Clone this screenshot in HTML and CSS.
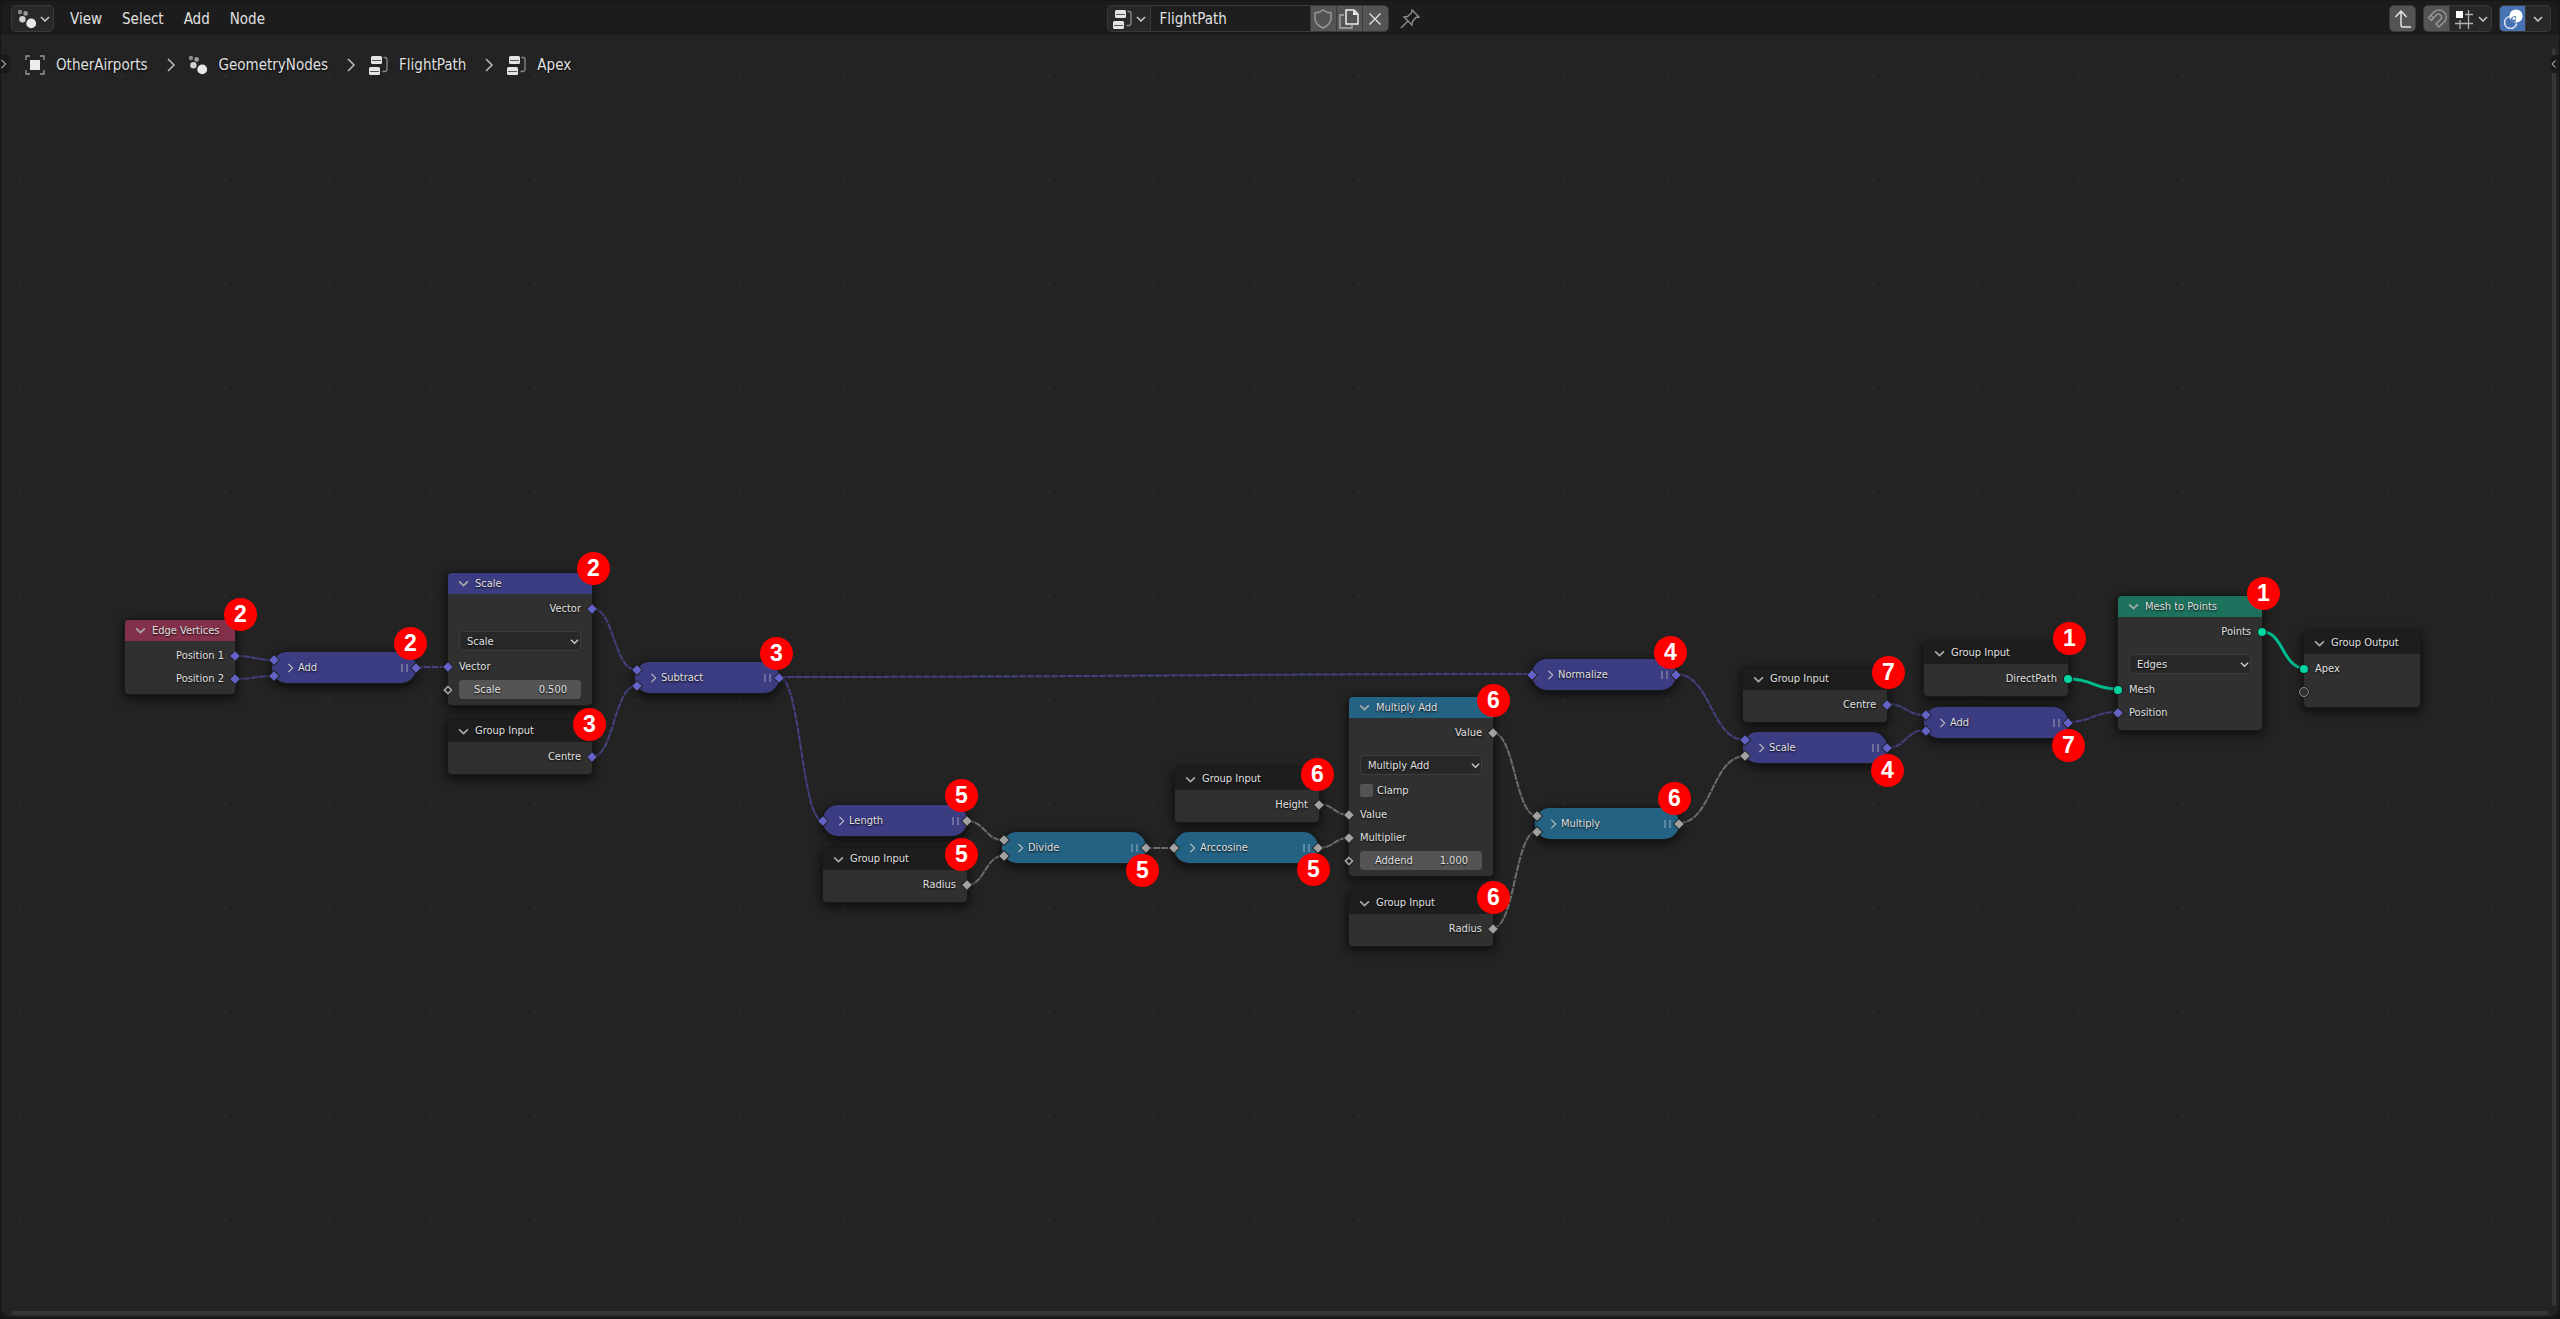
FILE: index.html
```html
<!DOCTYPE html>
<html lang="en">
<head>
<meta charset="utf-8">
<title>Geometry Nodes - Apex</title>
<link rel="stylesheet" href="styles.css">
</head>
<body>
<svg class="defs" width="0" height="0" aria-hidden="true">
  <symbol id="i-geo" viewBox="0 0 20 20"><circle cx="3" cy="3" r="2.2" fill="#8a8a8a"/><circle cx="8.6" cy="4.4" r="2.3" fill="#9c9c9c"/><circle cx="5.4" cy="10.2" r="3.2" fill="#cfcfcf"/><circle cx="14.2" cy="14.4" r="4.9" fill="#e8e8e8"/></symbol>
  <symbol id="i-tree" viewBox="0 0 20 20"><rect x="3" y="1" width="11" height="8" rx="1.5" fill="#e4e4e4"/><path d="M4 5.5h9" stroke="#555" stroke-width="1"/><rect x="1" y="12" width="11" height="8" rx="1.5" fill="#e4e4e4"/><path d="M2 16.5h9" stroke="#555" stroke-width="1"/><path d="M15.500 2.500h1.500q2 0 2 2v9.500q0 2.500-2.500 2.500h-2" fill="none" stroke="#8a8a8a" stroke-width="1.300"/></symbol>
  <symbol id="i-object" viewBox="0 0 20 20"><rect x="5" y="5" width="10" height="10" fill="#ececec"/><path d="M1 5V1h4M15 1h4v4M19 15v4h-4M5 19H1v-4" fill="none" stroke="#999" stroke-width="1.300"/></symbol>
  <symbol id="i-down" viewBox="0 0 10 10"><path d="M1 3l4 4 4-4" fill="none" stroke="currentColor" stroke-width="1.500"/></symbol>
  <symbol id="i-right" viewBox="0 0 10 14"><path d="M2 1l6 6-6 6" fill="none" stroke="currentColor" stroke-width="1.500"/></symbol>
  <symbol id="i-left" viewBox="0 0 10 14"><path d="M8 2L3 7l5 5" fill="none" stroke="currentColor" stroke-width="1.500"/></symbol>
  <symbol id="i-shield" viewBox="0 0 20 20"><path d="M10 1c2.500 2 5 2.800 8 3v5c0 5-3.500 8-8 10-4.500-2-8-5-8-10V4c3-.2 5.500-1 8-3z" fill="none" stroke="#999" stroke-width="1.500"/></symbol>
  <symbol id="i-copy" viewBox="0 0 20 20"><path d="M5 6H1v13h12v-3" fill="none" stroke="#aaa" stroke-width="1.400"/><path d="M7 1h8l4 4v10H7z" fill="none" stroke="#eee" stroke-width="1.500"/><path d="M14 1l5 5h-5z" fill="#eee"/></symbol>
  <symbol id="i-close" viewBox="0 0 20 20"><path d="M4.500 4.500l11 11M15.500 4.500l-11 11" fill="none" stroke="#e0e0e0" stroke-width="1.400"/></symbol>
  <symbol id="i-pin" viewBox="0 0 20 20"><path d="M12 1l7 7-3 .5-3.500 4L12 16 4 8l3.500-.5 4-3.500zM7.500 12.500L1 19" fill="none" stroke="#8f8f8f" stroke-width="1.400"/></symbol>
  <symbol id="i-parent" viewBox="0 0 20 20"><path d="M2.500 8L8 2l5.500 6M8 2v14q0 2 2 2h8" fill="none" stroke="#e4e4e4" stroke-width="1.500"/></symbol>
  <symbol id="i-magnet" viewBox="0 0 20 20"><path d="M1.500 8.500L7 3c7-6 16 3 10.500 9.500L12 18l-3-3 5-5c2-3-2-6-4.500-4.500l-5 6zM4 6.500l3 3" fill="none" stroke="#9a9a9a" stroke-width="1.400"/></symbol>
  <symbol id="i-grid" viewBox="0 0 20 20"><path d="M6 11v9M14.500 1v19M11 5.500h8M1 14.500h18" fill="none" stroke="#b0b0b0" stroke-width="1.300"/><rect x="2" y="2" width="7" height="7" fill="#fff"/></symbol>
  <symbol id="i-overlay" viewBox="0 0 20 20"><circle cx="13" cy="7" r="6.600" fill="#fff"/><path d="M7 7.500a6 6 0 1 0 6.500 7" fill="none" stroke="#dfe8f6" stroke-width="1.600"/><path d="M7.500 10.500q1-3.500 5-3.500 1.500 3.500-.5 6-3.500.5-4.500-2.500z" fill="#4772b3"/><circle cx="11" cy="9.500" r="1.600" fill="#fff"/></symbol>
</svg>

<main class="editor">
  <header class="bar">
    <div class="bar-left">
      <button class="box editor-type" aria-label="Editor type"><svg class="ico"><use href="#i-geo"/></svg><svg class="caret"><use href="#i-down"/></svg></button>
      <nav class="menus"><button>View</button><button>Select</button><button>Add</button><button>Node</button></nav>
    </div>
    <div class="bar-mid">
      <div class="box group">
        <button class="pick" aria-label="Browse node tree"><svg class="ico"><use href="#i-tree"/></svg><svg class="caret"><use href="#i-down"/></svg></button>
        <input class="tree-name" type="text" value="FlightPath" aria-label="Node tree name">
        <button class="sq lit" aria-label="Fake user"><svg class="ico"><use href="#i-shield"/></svg></button>
        <button class="sq lit" aria-label="New node tree"><svg class="ico"><use href="#i-copy"/></svg></button>
        <button class="sq lit" aria-label="Unlink"><svg class="ico"><use href="#i-close"/></svg></button>
      </div>
      <button class="pin" aria-label="Pin"><svg class="ico"><use href="#i-pin"/></svg></button>
    </div>
    <div class="bar-right">
      <div class="box group"><button class="sq lit" aria-label="Parent node tree"><svg class="ico"><use href="#i-parent"/></svg></button></div>
      <div class="box group"><button class="sq lit" aria-label="Snap"><svg class="ico"><use href="#i-magnet"/></svg></button><button class="pick" aria-label="Snap element"><svg class="ico"><use href="#i-grid"/></svg><svg class="caret"><use href="#i-down"/></svg></button></div>
      <div class="box group"><button class="sq on" aria-label="Overlays"><svg class="ico"><use href="#i-overlay"/></svg></button><button class="sq" aria-label="Overlay options"><svg class="caret"><use href="#i-down"/></svg></button></div>
    </div>
  </header>

  <nav class="crumbs" aria-label="Path">
    <a href="#object"><svg class="ico"><use href="#i-object"/></svg>OtherAirports</a><svg class="sep"><use href="#i-right"/></svg>
    <a href="#modifier"><svg class="ico"><use href="#i-geo"/></svg>GeometryNodes</a><svg class="sep"><use href="#i-right"/></svg>
    <a href="#flightpath"><svg class="ico"><use href="#i-tree"/></svg>FlightPath</a><svg class="sep"><use href="#i-right"/></svg>
    <a href="#apex"><svg class="ico"><use href="#i-tree"/></svg>Apex</a>
  </nav>

  <section class="canvas" aria-label="Node graph">
    <svg class="links" aria-hidden="true">
      <g class="vec">
        <path d="M235 656C254 656 255 660 274 660"/>
        <path d="M235 679C254 679 255 676 274 676"/>
        <path d="M416 667H448"/>
        <path d="M592 608C614 608 614 670 636 670"/>
        <path d="M592 757C614 757 614 686 636 686"/>
        <path d="M779 677C1100 677 1211 674 1532 674"/>
        <path d="M779 677C801 677 801 821 823 821"/>
        <path d="M1676 674C1711 674 1711 740 1745 740"/>
        <path d="M1887 704C1906 704 1906 715 1925 715"/>
        <path d="M1887 748C1906 748 1906 730 1925 730"/>
        <path d="M2067 722C2093 722 2093 712 2118 712"/>
      </g>
      <g class="val">
        <path d="M967 821C985 821 985 840 1003 840"/>
        <path d="M967 885C985 885 985 856 1003 856"/>
        <path d="M1145 848H1174"/>
        <path d="M1318 804C1334 804 1334 815 1349 815"/>
        <path d="M1318 848C1334 848 1334 838 1349 838"/>
        <path d="M1493 733C1515 733 1515 816 1537 816"/>
        <path d="M1493 928C1515 928 1515 831 1537 831"/>
        <path d="M1679 823C1712 823 1712 756 1745 756"/>
      </g>
      <g class="geo">
        <path d="M2068 679C2094 679 2093 689 2118 689"/>
        <path d="M2263 632C2283 632 2283 668 2304 668"/>
      </g>
    </svg>

    <article class="node n-edge red"><h2><svg class="fold"><use href="#i-down"/></svg>Edge Vertices</h2>
      <p class="row out">Position 1<i class="s vec"></i></p><p class="row out">Position 2<i class="s vec"></i></p></article>

    <article class="pill n-add1 indigo"><i class="s vec a"></i><i class="s vec b"></i><svg class="unfold"><use href="#i-right"/></svg><span>Add</span><i class="grip"></i><i class="s vec o"></i></article>

    <article class="node n-scale indigo"><h2><svg class="fold"><use href="#i-down"/></svg>Scale</h2>
      <p class="row out">Vector<i class="s vec"></i></p>
      <div class="drop"><select aria-label="Operation"><option>Scale</option></select><svg class="caret"><use href="#i-down"/></svg></div>
      <p class="row in">Vector<i class="s vec"></i></p>
      <div class="row in"><label class="num">Scale<input type="text" value="0.500"></label><i class="s hollow"></i></div></article>

    <article class="node io n-gi-centre1"><h2><svg class="fold"><use href="#i-down"/></svg>Group Input</h2><p class="row out">Centre<i class="s vec"></i></p></article>

    <article class="pill n-sub indigo"><i class="s vec a"></i><i class="s vec b"></i><svg class="unfold"><use href="#i-right"/></svg><span>Subtract</span><i class="grip"></i><i class="s vec o"></i></article>

    <article class="pill n-len indigo"><i class="s vec m"></i><svg class="unfold"><use href="#i-right"/></svg><span>Length</span><i class="grip"></i><i class="s val o"></i></article>

    <article class="node io n-gi-radius1"><h2><svg class="fold"><use href="#i-down"/></svg>Group Input</h2><p class="row out">Radius<i class="s val"></i></p></article>

    <article class="pill n-div teal"><i class="s val a"></i><i class="s val b"></i><svg class="unfold"><use href="#i-right"/></svg><span>Divide</span><i class="grip"></i><i class="s val o"></i></article>

    <article class="node io n-gi-height"><h2><svg class="fold"><use href="#i-down"/></svg>Group Input</h2><p class="row out">Height<i class="s val"></i></p></article>

    <article class="pill n-acos teal"><i class="s val m"></i><svg class="unfold"><use href="#i-right"/></svg><span>Arccosine</span><i class="grip"></i><i class="s val o"></i></article>

    <article class="node n-madd teal"><h2><svg class="fold"><use href="#i-down"/></svg>Multiply Add</h2>
      <p class="row out">Value<i class="s val"></i></p>
      <div class="drop"><select aria-label="Operation"><option>Multiply Add</option></select><svg class="caret"><use href="#i-down"/></svg></div>
      <div class="row in check"><label><input type="checkbox">Clamp</label></div>
      <p class="row in">Value<i class="s val"></i></p>
      <p class="row in">Multiplier<i class="s val"></i></p>
      <div class="row in"><label class="num">Addend<input type="text" value="1.000"></label><i class="s hollow"></i></div></article>

    <article class="node io n-gi-radius2"><h2><svg class="fold"><use href="#i-down"/></svg>Group Input</h2><p class="row out">Radius<i class="s val"></i></p></article>

    <article class="pill n-mul teal"><i class="s val a"></i><i class="s val b"></i><svg class="unfold"><use href="#i-right"/></svg><span>Multiply</span><i class="grip"></i><i class="s val o"></i></article>

    <article class="pill n-norm indigo"><i class="s vec m"></i><svg class="unfold"><use href="#i-right"/></svg><span>Normalize</span><i class="grip"></i><i class="s vec o"></i></article>

    <article class="node io n-gi-centre2"><h2><svg class="fold"><use href="#i-down"/></svg>Group Input</h2><p class="row out">Centre<i class="s vec"></i></p></article>

    <article class="pill n-scale2 indigo"><i class="s vec a"></i><i class="s val b"></i><svg class="unfold"><use href="#i-right"/></svg><span>Scale</span><i class="grip"></i><i class="s vec o"></i></article>

    <article class="node io n-gi-path"><h2><svg class="fold"><use href="#i-down"/></svg>Group Input</h2><p class="row out">DirectPath<i class="s geo"></i></p></article>

    <article class="pill n-add2 indigo"><i class="s vec a"></i><i class="s vec b"></i><svg class="unfold"><use href="#i-right"/></svg><span>Add</span><i class="grip"></i><i class="s vec o"></i></article>

    <article class="node n-mesh green"><h2><svg class="fold"><use href="#i-down"/></svg>Mesh to Points</h2>
      <p class="row out">Points<i class="s geo"></i></p>
      <div class="drop"><select aria-label="Mode"><option>Edges</option></select><svg class="caret"><use href="#i-down"/></svg></div>
      <p class="row in">Mesh<i class="s geo"></i></p>
      <p class="row in">Position<i class="s vec"></i></p></article>

    <article class="node io n-out"><h2><svg class="fold"><use href="#i-down"/></svg>Group Output</h2><p class="row in">Apex<i class="s geo"></i></p><p class="row in"><i class="s virtual"></i></p></article>

    <b class="badge" style="left:240px;top:614px">2</b>
    <b class="badge" style="left:410px;top:643px">2</b>
    <b class="badge" style="left:593px;top:568px">2</b>
    <b class="badge" style="left:589px;top:724px">3</b>
    <b class="badge" style="left:776px;top:653px">3</b>
    <b class="badge" style="left:961px;top:795px">5</b>
    <b class="badge" style="left:961px;top:854px">5</b>
    <b class="badge" style="left:1142px;top:870px">5</b>
    <b class="badge" style="left:1313px;top:869px">5</b>
    <b class="badge" style="left:1317px;top:774px">6</b>
    <b class="badge" style="left:1493px;top:700px">6</b>
    <b class="badge" style="left:1493px;top:897px">6</b>
    <b class="badge" style="left:1674px;top:798px">6</b>
    <b class="badge" style="left:1670px;top:652px">4</b>
    <b class="badge" style="left:1888px;top:672px">7</b>
    <b class="badge" style="left:1887px;top:770px">4</b>
    <b class="badge" style="left:2069px;top:638px">1</b>
    <b class="badge" style="left:2068px;top:745px">7</b>
    <b class="badge" style="left:2263px;top:593px">1</b>
  </section>

  <button class="tab tab-left" aria-label="Show toolbar"><svg><use href="#i-right"/></svg></button>
  <button class="tab tab-right" aria-label="Show sidebar"><svg><use href="#i-left"/></svg></button>
  <div class="scroll scroll-x"></div>
  <div class="scroll scroll-y"></div>
</main>
</body>
</html>
```
FILE: styles.css
```css
* { box-sizing: border-box; }
body {
  margin: 0;
  background: #161616;
  color: #e0e0e0;
  font: 15px/20px "DejaVu Sans Condensed", "DejaVu Sans", sans-serif;
}
button, input, select {
  font: inherit;
  color: inherit;
  border: 0;
  padding: 0;
  margin: 0;
  background: none;
}
svg { display: block; flex: none; }
h2, p { margin: 0; }
.defs { position: absolute; }

.editor {
  position: relative;
  display: flex;
  flex-direction: column;
  min-height: calc(100vh - 3px);
  margin: 1px 1px 2px;
  border-radius: 10px;
  overflow: hidden;
  background: #232323;
}

/* header bar */
.bar {
  display: grid;
  grid-template-columns: 1fr auto 1fr;
  align-items: center;
  height: 34px;
  padding: 1px 8px 0 10px;
  background: #1c1c1c;
  z-index: 1;
}
.bar-left, .bar-mid, .bar-right, .menus, .group { display: flex; align-items: center; }
.bar-left { gap: 16px; }
.bar-mid { gap: 11px; padding-right: 36px; }
.bar-right { justify-content: flex-end; gap: 7px; }
.menus { gap: 20px; }
.box {
  height: 27px;
  border: 1px solid #3a3a3a;
  border-radius: 5px;
  background: #282828;
  overflow: hidden;
}
.editor-type { display: flex; align-items: center; gap: 3px; width: 43px; padding-left: 5px; }
.group > * + * { border-left: 1px solid #3a3a3a; }
.ico { width: 20px; height: 20px; }
.caret { width: 10px; height: 10px; color: #ccc; }
.pick { display: flex; align-items: center; gap: 4px; width: 42px; height: 25px; padding-left: 4px; }
.sq { display: flex; align-items: center; justify-content: center; width: 26px; height: 25px; }
.bar-right .sq { width: 25px; }
.lit { background: #545454; }
.on { background: #4772b3; }
.tree-name { width: 160px; height: 25px; padding: 0 9px; background: #1d1d1d; }

/* path */
.crumbs {
  display: flex;
  align-items: center;
  gap: 12px;
  padding: 20px 24px 0;
  z-index: 1;
}
.crumbs a {
  display: flex;
  align-items: center;
  gap: 11px;
  margin-right: 6px;
  color: inherit;
  text-decoration: none;
  text-shadow: 0 1px 2px #000;
}
.sep { width: 10px; height: 14px; color: #bbb; }

/* node canvas */
.canvas {
  position: absolute;
  inset: -1px;
  font-size: 11px;
  line-height: 20px;
  background-image: radial-gradient(circle, #282828 2px, transparent 2px);
  background-size: 103px 104px;
  background-position: 71px 24px;
}
.links { position: absolute; inset: 0; width: 100%; height: 100%; fill: none; stroke-width: 2; }
.links .vec { stroke: #424280; stroke-dasharray: 7 1; }
.links .val { stroke: #6c6c6c; stroke-dasharray: 7 1; }
.links .geo { stroke: #00bd8f; stroke-width: 3; }

.node, .pill { position: absolute; width: 144px; text-shadow: 0 1px 2px #000; }
.node {
  padding-bottom: 4px;
  border-radius: 4px;
  background: #303030;
  box-shadow: 0 0 0 1px #191919, 0 3px 10px 2px #0009;
}
.node h2 {
  display: flex;
  align-items: center;
  gap: 6px;
  height: 21px;
  margin-bottom: 3px;
  padding-left: 10px;
  border-radius: 4px 4px 0 0;
  font-size: 11px;
  font-weight: normal;
  line-height: 20px;
}
.fold { width: 11px; height: 11px; color: #aaa; }
.io { padding-bottom: 6px; }
.io h2 { height: 22px; background: #1d1d1d; }
.red h2 { background: #83314a; }
.indigo h2, .pill.indigo { background: #3c3c83; }
.teal h2, .pill.teal { background: #246283; }
.green h2 { background: #1d725e; }

.row {
  position: relative;
  display: flex;
  align-items: center;
  height: 23px;
  padding: 0 11px;
}
.out { justify-content: flex-end; }
.row .s { position: absolute; }
.out .s { right: -4px; }
.in .s { left: -4px; }
.s {
  width: 8px;
  height: 8px;
  transform: rotate(45deg) scale(.85);
  background: #6363c7;
  box-shadow: 0 0 0 1px #1c1c1c;
}
.s.val { background: #a1a1a1; }
.s.geo { background: #00d6a3; border-radius: 50%; transform: none; }
.s.hollow { border: 2px solid #a1a1a1; background: #222; }
.row .virtual { border: 1px solid #8a8a8a; background: #303030; border-radius: 50%; transform: none; width: 10px; height: 10px; left: -5px; }

.drop { position: relative; margin: 11px 11px 4px; }
.drop select {
  display: block;
  appearance: none;
  width: 100%;
  height: 20px;
  padding: 0 7px;
  border: 1px solid #3d3d3d;
  border-radius: 4px;
  background: #282828;
  text-shadow: inherit;
}
.drop .caret { position: absolute; right: 2px; top: 6px; width: 9px; height: 9px; }
.num {
  display: flex;
  align-items: center;
  justify-content: space-between;
  width: 100%;
  height: 19px;
  padding: 0 14px 0 15px;
  border-radius: 4px;
  background: #545454;
}
.num input { width: 40px; text-align: right; text-shadow: inherit; }
.check { margin-bottom: 1px; }
.check label { display: flex; align-items: center; gap: 4px; }
.check input { appearance: none; width: 13px; height: 13px; border-radius: 2px; background: #545454; }

.pill {
  display: flex;
  align-items: center;
  height: 31px;
  padding: 0 8px 0 15px;
  border-radius: 15px;
  box-shadow: 0 0 0 1px #1a1a1a, 0 3px 10px 2px #0009;
}
.pill span { flex: 1; }
.unfold { width: 7px; height: 10px; margin-right: 4px; color: #ccc; }
.grip { width: 7px; height: 8px; border: solid #6e6e9e; border-width: 0 2px; }
.teal .grip { border-color: #5f8aa3; }
.pill .s { position: absolute; left: -4px; }
.pill .m, .pill .o { top: 12px; }
.pill .a { top: 4px; left: -2px; }
.pill .b { top: 20px; left: -2px; }
.pill .o { left: auto; right: -4px; }

.n-edge { left: 125px; top: 620px; width: 110px; }
.n-add1 { left: 272px; top: 652px; }
.n-scale { left: 448px; top: 573px; }
.n-gi-centre1 { left: 448px; top: 720px; }
.n-sub { left: 635px; top: 662px; }
.n-len { left: 823px; top: 805px; }
.n-gi-radius1 { left: 823px; top: 848px; }
.n-div { left: 1002px; top: 832px; }
.n-gi-height { left: 1175px; top: 768px; }
.n-acos { left: 1174px; top: 832px; }
.n-madd { left: 1349px; top: 697px; }
.n-gi-radius2 { left: 1349px; top: 892px; }
.n-mul { left: 1535px; top: 808px; }
.n-norm { left: 1532px; top: 659px; }
.n-gi-centre2 { left: 1743px; top: 668px; }
.n-scale2 { left: 1743px; top: 732px; }
.n-gi-path { left: 1924px; top: 642px; }
.n-add2 { left: 1924px; top: 707px; }
.n-mesh { left: 2118px; top: 596px; padding-bottom: 6px; }
.n-out { left: 2304px; top: 632px; width: 116px; padding-bottom: 4px; }

/* step number markers */
.badge {
  position: absolute;
  width: 33px;
  height: 33px;
  margin: -16px 0 0 -16px;
  border-radius: 50%;
  background: #f00;
  color: #fff;
  font: bold 23px/33px "Liberation Sans", Arial, sans-serif;
  text-align: center;
}

/* region toggles and scroll bars */
.tab {
  position: absolute;
  top: 54px;
  display: flex;
  align-items: center;
  width: 10px;
  height: 18px;
  background: #1a1a1a;
  color: #bbb;
  z-index: 2;
}
.tab svg { width: 7px; height: 10px; }
.tab-left { left: -1px; border-radius: 0 4px 4px 0; }
.tab-right { right: -1px; border-radius: 4px 0 0 4px; }
.scroll { position: absolute; border-radius: 2px; background: #363636; }
.scroll-x { left: 11px; right: 11px; bottom: 2px; height: 4px; }
.scroll-y { top: 47px; bottom: 11px; right: 3px; width: 4px; }
```
